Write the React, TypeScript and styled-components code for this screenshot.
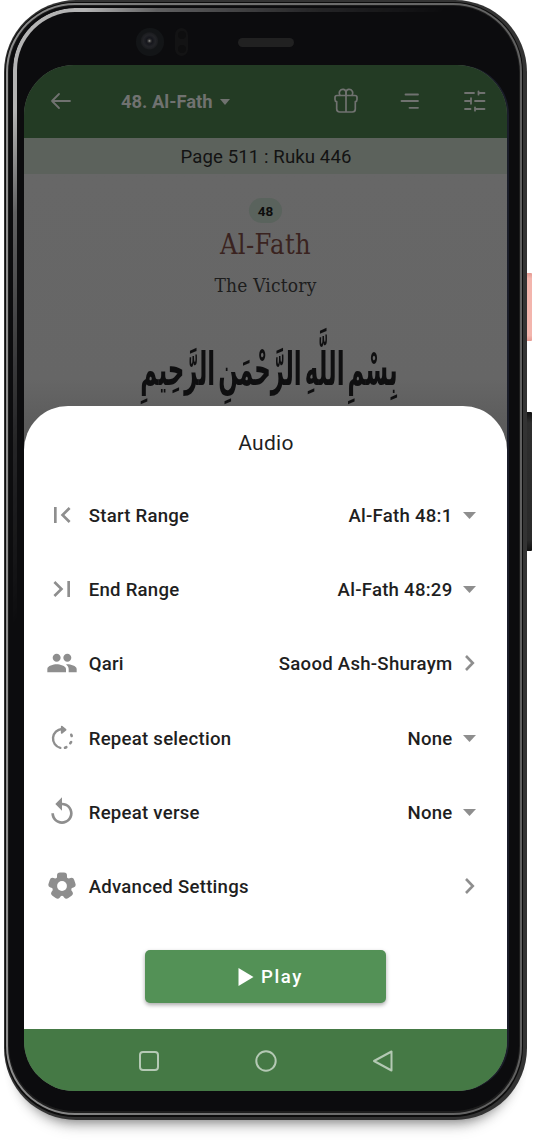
import React from "react";
import styled, { createGlobalStyle } from "styled-components";
import { MdFirstPage, MdLastPage, MdPeople, MdReplay } from "react-icons/md";

const GlobalStyle = createGlobalStyle`
  * { box-sizing: border-box; }
  html, body { margin: 0; padding: 0; background: #fff; overflow: hidden; }
  body { font-family: Roboto, "Liberation Sans", sans-serif; color: #1f1f1f; }
  svg { display: block; flex: none; }
`;

const Stage = styled.div`
  width: 537px;
  height: 1146px;
  padding-left: 4px;
  overflow: hidden;
`;

const Shell = styled.div`
  position: relative;
  width: 523px;
  height: 1120px;
  padding: 2px 4px 3px 1px;
  border-radius: 72px;
  background: #333;
  box-shadow: 0 14px 12px -12px rgba(0, 0, 0, 0.42), 0 20px 16px -14px rgba(0, 0, 0, 0.14);
`;

const DarkRim = styled.div`
  height: 100%;
  padding: 1px 1px 2px 1px;
  border-radius: 70px;
  background: #0c0c0c;
`;

const MetalRim = styled.div`
  height: 100%;
  padding: 2px 2px 2px 2px;
  border-radius: 69px;
  background: linear-gradient(90deg, #8e8e8e 0, #777 30%, #606060 100%);
`;

const InnerRim = styled.div`
  height: 100%;
  padding: 1px 1px 2px 1px;
  border-radius: 67px;
  background: #1d1d1d;
`;

const Bezel = styled.div`
  position: relative;
  display: flex;
  flex-direction: column;
  height: 100%;
  padding: 0 9px 0 15px;
  border-radius: 66px;
  background: #0c0c0e;

  &::before {
    content: "";
    position: absolute;
    inset: 2px 1px 0 4px;
    border: 4px solid #b4b4b4;
    border-right: 0;
    border-bottom: 0;
    border-radius: 62px 62px 0 0;
    mask-image: linear-gradient(125deg, #000 0, #000 60px, rgba(0, 0, 0, 0.5) 120px, rgba(0, 0, 0, 0.15) 250px, transparent 360px);
  }
`;

const SideKey = styled.div<{ $top: number; $height: number; $color: string }>`
  position: absolute;
  left: 523px;
  top: ${(p) => p.$top}px;
  width: 5px;
  height: ${(p) => p.$height}px;
  border-radius: 0 1px 1px 0;
  background: ${(p) => p.$color};
`;

const SensorBar = styled.div`
  display: flex;
  align-items: center;
  height: 59px;
  padding: 13px 0 0 112px;
`;

const Camera = styled.div`
  width: 28px;
  height: 28px;
  margin-right: 11px;
  border-radius: 50%;
  background: radial-gradient(circle at 48% 46%, #999 0, #333 1.5px, #15161c 3px, #222327 6px, #1c1d20 8px, #131517 9px);
`;

const Sensor = styled.div`
  display: flex;
  flex-direction: column;
  align-items: center;
  justify-content: space-between;
  width: 13px;
  height: 28px;
  padding: 3px 0;
  margin-right: 50px;
  border-radius: 7px;
  background: #131314;
`;

const SensorEye = styled.i`
  width: 8px;
  height: 8px;
  border-radius: 50%;
  background: #0e0e0f;
`;

const Speaker = styled.div`
  width: 56px;
  height: 9px;
  border-radius: 5px;
  background: #212121;
`;

const Screen = styled.div`
  position: relative;
  display: flex;
  flex-direction: column;
  width: 483px;
  height: 1026px;
  border-radius: 50px;
  overflow: hidden;
  background: #666;
`;

const ScreenEdge = styled.div`
  width: 483px;
  border-radius: 50px;
  box-shadow: 2px 0 0 #1a1d29;
`;

const AppBar = styled.header`
  display: flex;
  align-items: center;
  height: 73px;
  flex: none;
  padding-left: 26px;
  color: #707270;
  background: #233b24;

  > svg { margin-bottom: 1px; }
`;

const AppTitle = styled.h1`
  display: flex;
  align-items: center;
  gap: 7px;
  width: 213px;
  margin: 0 0 0 49px;
  font-size: 18.4px;
  font-weight: 700;
  line-height: 24px;
  white-space: nowrap;
`;

const AppActions = styled.div`
  display: flex;
  align-items: center;
  gap: 40px;
  margin-bottom: 2px;
`;

const PageBar = styled.div`
  height: 36px;
  flex: none;
  padding-left: 1px;
  line-height: 38px;
  font-size: 18.6px;
  letter-spacing: 0.1px;
  text-align: center;
  color: #131313;
  background: #5c625c;
`;

const Page = styled.main`
  display: flex;
  flex-direction: column;
  align-items: center;
  height: 275px;
  flex: none;
  padding-top: 24px;
  background: linear-gradient(#676767 0, #666 205px, #5c5c5c 250px);
`;

const Badge = styled.span`
  width: 33px;
  height: 25px;
  border-radius: 13px;
  line-height: 26px;
  font-size: 13.5px;
  font-weight: 700;
  text-align: center;
  color: #0d0d0d;
  background: #5a635d;
`;

const SurahName = styled.h2`
  margin: 3px 0 0;
  font: 400 27px/38px "DejaVu Serif Condensed", "DejaVu Serif", serif;
  letter-spacing: 0.4px;
  color: #3a2320;
`;

const Meaning = styled.p`
  margin: 8px 0 0;
  font: 400 19px/26px "DejaVu Serif Condensed", "DejaVu Serif", serif;
  letter-spacing: 0.2px;
  color: #1d1d1d;
`;

const Basmala = styled.p`
  margin: 31px 0 0;
  padding-left: 7px;
  font: 700 23px/80px "DejaVu Sans", sans-serif;
  word-spacing: -5px;
  white-space: nowrap;
  color: #0f0f10;
  transform: scaleY(2);
`;

const Sheet = styled.section`
  position: relative;
  display: flex;
  flex-direction: column;
  align-items: center;
  height: 623px;
  flex: none;
  margin-top: -43px;
  border-radius: 44px 44px 0 0;
  background: #fff;
`;

const SheetTitle = styled.h3`
  margin: 0;
  padding: 22px 0 0 1px;
  height: 72px;
  font-size: 21px;
  font-weight: 400;
  line-height: 30px;
  letter-spacing: 0.3px;
`;

const Row = styled.div`
  display: flex;
  align-items: center;
  align-self: stretch;
  height: 74.3px;
  padding: 0 27.5px 0 21px;
  font-size: 18.6px;
  font-weight: 500;
  letter-spacing: 0.25px;
`;

const RowIcon = styled.span`
  display: flex;
  justify-content: center;
  width: 34px;
  margin-right: 9.7px;
  padding-bottom: 1px;
  color: #8e8e8e;
`;

const RowText = styled.span<{ $grow?: boolean }>`
  flex: ${(p) => (p.$grow ? 1 : "none")};
  padding-top: 1.5px;
`;

const RowMark = styled.span<{ $raised: boolean }>`
  display: flex;
  justify-content: center;
  width: 20px;
  margin-left: 7px;
  padding-bottom: ${(p) => (p.$raised ? 2 : 0)}px;
  color: #8e8e8e;
`;

const PlayButton = styled.button`
  display: flex;
  align-items: center;
  justify-content: center;
  gap: 7px;
  width: 241px;
  height: 53px;
  margin-top: 26px;
  padding: 1px 0 0 10px;
  border: 0;
  border-radius: 5px;
  font: 500 18.6px/24px Roboto, sans-serif;
  letter-spacing: 1.6px;
  color: #fff;
  background: #539156;
  box-shadow: 0 2px 4px rgba(0, 0, 0, 0.35);
`;

const NavBar = styled.nav`
  display: flex;
  align-items: center;
  justify-content: center;
  gap: 95px;
  flex: 1;
  padding-top: 2px;
  color: #b4c9b4;
  background: #457945;
`;

const line = { fill: "none", stroke: "currentColor", strokeLinecap: "round", strokeLinejoin: "round" } as const;

const BackIcon = () => (
  <svg width="22" height="20" viewBox="0 0 22 20" {...line} strokeWidth="1.8">
    <path d="M20 10H2M9 3L2 10l7 7" />
  </svg>
);

const GiftIcon = () => (
  <svg width="24" height="25" viewBox="0 0 24 25" {...line} strokeWidth="1.7">
    <path d="M3 7.5h18q2 0 2 2v2q0 2-1.7 2.2V21q0 3-3 3H5.700q-3 0-3-3v-7.300Q1 13.500 1 11.500v-2q0-2 2-2zM12 4v20" />
    <path d="M6 7.300Q4.700 5 5.800 3.100C7.400.3 12 .8 12 4.500V7M18 7.300Q19.300 5 18.200 3.100C16.600.3 12 .8 12 4.500" />
  </svg>
);

const LinesIcon = () => (
  <svg width="24" height="20" viewBox="0 0 24 20" {...line} strokeWidth="1.8">
    <path d="M7.500 3.500h12.500M3.500 10h16.500M11.500 16.800h8.500" />
  </svg>
);

const TuneIcon = () => (
  <svg width="26" height="22" viewBox="-2 0 26 22" {...line} strokeWidth="1.800">
    <path d="M1 3h9M14.500 1.300v3.400M14.500 3h6M1 11h6M7 8.200v5.600M11 11h9.500M1 19h5.500M11 17.300v3.400M11 19h9.500" />
  </svg>
);

const RepeatSelectionIcon = () => (
  <svg width="26" height="26" viewBox="0 0 26 26" {...line} strokeWidth="2.400">
    <path d="M11.300 22.900A9.600 9.600 0 0 1 13 4" />
    <path d="M12.800 1.800L16.500 4.800L12.800 7.800z" fill="currentColor" strokeWidth="1.900" />
    <path d="M16 22.700l1.300-.5M21.300 18.200l.8-1.100M22.300 9.800l.4 1.200" strokeWidth="2.600" />
  </svg>
);

const GearIcon = () => (
  <svg width="28" height="28" viewBox="-14 -14 28 28">
    <g fill="currentColor">
      {[0, 72, 144, 216, 288].map((a) => (
        <rect key={a} x="-5" y="-13.500" width="10" height="11" rx="3" transform={`rotate(${a})`} />
      ))}
      <circle r="10" />
    </g>
    <circle r="4.900" fill="#fff" />
  </svg>
);

const ChevronIcon = () => (
  <svg width="14" height="18" viewBox="0 0 14 18" fill="none" stroke="currentColor" strokeWidth="2.600">
    <path d="M3 2L9.800 9L3 16" />
  </svg>
);

const Caret = ({ width, height }: { width: number; height: number }) => (
  <svg width={width} height={height} viewBox="0 0 14 7" preserveAspectRatio="none">
    <path d="M0 0h14L7 7z" fill="currentColor" />
  </svg>
);

type Option = { icon: React.ReactNode; label: string; value?: string; opens: "menu" | "page" };

const options: Option[] = [
  { icon: <MdFirstPage size={32} />, label: "Start Range", value: "Al-Fath 48:1", opens: "menu" },
  { icon: <MdLastPage size={32} />, label: "End Range", value: "Al-Fath 48:29", opens: "menu" },
  { icon: <MdPeople size={32} />, label: "Qari", value: "Saood Ash-Shuraym", opens: "page" },
  { icon: <RepeatSelectionIcon />, label: "Repeat selection", value: "None", opens: "menu" },
  { icon: <MdReplay size={32} />, label: "Repeat verse", value: "None", opens: "menu" },
  { icon: <GearIcon />, label: "Advanced Settings", opens: "page" },
];

export default function App() {
  return (
    <Stage>
      <GlobalStyle />
      <Shell>
        <SideKey $top={273} $height={68} $color="linear-gradient(#e59a92, #f3b5ad 8%, #f3b5ad 92%, #e59a92)" />
        <SideKey $top={412} $height={139} $color="linear-gradient(#111, #2e2e2e 8%, #2a2a2a 92%, #111)" />
        <DarkRim>
          <MetalRim>
            <InnerRim>
              <Bezel>
                <SensorBar>
                  <Camera />
                  <Sensor>
                    <SensorEye />
                    <SensorEye />
                  </Sensor>
                  <Speaker />
                </SensorBar>
                <ScreenEdge>
                  <Screen>
                    <AppBar>
                      <BackIcon />
                      <AppTitle>
                        48. Al-Fath <Caret width={10} height={6} />
                      </AppTitle>
                      <AppActions>
                        <GiftIcon />
                        <LinesIcon />
                        <TuneIcon />
                      </AppActions>
                    </AppBar>
                    <PageBar>Page 511 : Ruku 446</PageBar>
                    <Page>
                      <Badge>48</Badge>
                      <SurahName>Al-Fath</SurahName>
                      <Meaning>The Victory</Meaning>
                      <Basmala lang="ar" dir="rtl">بِسْمِ اللَّهِ الرَّحْمَنِ الرَّحِيمِ</Basmala>
                    </Page>
                    <Sheet>
                      <SheetTitle>Audio</SheetTitle>
                      {options.map((o) => (
                        <Row key={o.label}>
                          <RowIcon>{o.icon}</RowIcon>
                          <RowText $grow>{o.label}</RowText>
                          {o.value && <RowText>{o.value}</RowText>}
                          <RowMark $raised={o.opens === "page"}>
                            {o.opens === "menu" ? <Caret width={13} height={7} /> : <ChevronIcon />}
                          </RowMark>
                        </Row>
                      ))}
                      <PlayButton>
                        <svg width="16" height="18" viewBox="0 0 16 18">
                          <path d="M.5 0L15.500 9L.5 18z" fill="currentColor" />
                        </svg>
                        Play
                      </PlayButton>
                    </Sheet>
                    <NavBar>
                      <svg width="22" height="22" viewBox="0 0 22 22" {...line} strokeWidth="2">
                        <rect x="2" y="2" width="18" height="18" rx="3" />
                      </svg>
                      <svg width="22" height="22" viewBox="0 0 22 22" {...line} strokeWidth="2">
                        <circle cx="11" cy="11" r="9.700" />
                      </svg>
                      <svg width="22" height="22" viewBox="0 0 22 22" {...line} strokeWidth="2">
                        <path d="M19.500 1.500v19L2 11z" />
                      </svg>
                    </NavBar>
                  </Screen>
                </ScreenEdge>
              </Bezel>
            </InnerRim>
          </MetalRim>
        </DarkRim>
      </Shell>
    </Stage>
  );
}
